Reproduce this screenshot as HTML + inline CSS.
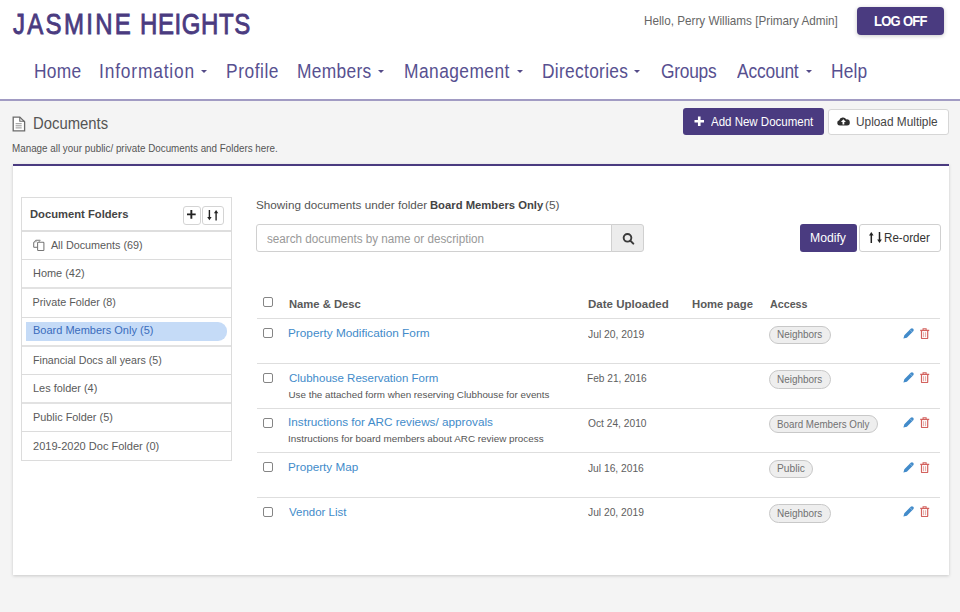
<!DOCTYPE html>
<html><head><meta charset="utf-8"><style>
*{margin:0;padding:0;box-sizing:border-box}
html,body{width:960px;height:612px;overflow:hidden;background:#f4f4f4;font-family:"Liberation Sans",sans-serif}
.a{position:absolute;white-space:nowrap;line-height:1;transform-origin:0 0}
.r{position:absolute}
.cb{position:absolute;width:10px;height:10px;border:1px solid #858585;border-radius:2px;background:#fff}
.caret{position:absolute;width:0;height:0;border-left:3.6px solid transparent;border-right:3.6px solid transparent;border-top:3.2px solid #544b88}
.hl{position:absolute;left:257px;width:683px;height:1px;background:#dedede}
.fb{position:absolute;left:22px;width:209px;height:1px;background:#dcdcdc}
.badge{position:absolute;height:18.5px;border:1px solid #c8c8c8;background:#eeeeee;border-radius:10px}
svg{position:absolute;overflow:visible}
</style></head><body>
<div class="r" style="left:0;top:0;width:960px;height:99px;background:#fff"></div>
<div class="r" style="left:0;top:99px;width:960px;height:2px;background:#a19bc3"></div>
<div class="a" style="left:13.04px;top:9.00px;font-size:30.00px;font-weight:normal;color:#4a3b80;transform:scaleX(0.8000);letter-spacing:2.875px;-webkit-text-stroke:0.9px #4a3b80;">JASMINE</div>
<div class="a" style="left:140.18px;top:9.00px;font-size:30.00px;font-weight:normal;color:#4a3b80;transform:scaleX(0.8000);letter-spacing:0.733px;-webkit-text-stroke:0.9px #4a3b80;">HEIGHTS</div>
<div class="a" style="left:644.06px;top:15.00px;font-size:12.35px;font-weight:normal;color:#666;transform:scaleX(0.9483);">Hello, Perry Williams [Primary Admin]</div>
<div class="r" style="left:857px;top:7px;width:87px;height:28.4px;background:#4a3b80;border-radius:4px;box-shadow:0 1px 4px rgba(0,0,0,.22)"></div>
<div class="a" style="left:873.76px;top:13.00px;font-size:15.10px;font-weight:bold;color:#fff;transform:scaleX(0.8600);letter-spacing:-0.819px;">LOG OFF</div>
<div class="a" style="left:33.81px;top:62.00px;font-size:19.30px;font-weight:normal;color:#575090;transform:scaleX(0.9000);letter-spacing:0.363px;">Home</div>
<div class="a" style="left:99.44px;top:62.00px;font-size:19.30px;font-weight:normal;color:#575090;transform:scaleX(0.9000);letter-spacing:0.927px;">Information</div>
<div class="a" style="left:226.21px;top:62.00px;font-size:19.30px;font-weight:normal;color:#575090;transform:scaleX(0.9000);letter-spacing:0.616px;">Profile</div>
<div class="a" style="left:297.31px;top:62.00px;font-size:19.30px;font-weight:normal;color:#575090;transform:scaleX(0.9000);letter-spacing:0.345px;">Members</div>
<div class="a" style="left:403.81px;top:62.00px;font-size:19.30px;font-weight:normal;color:#575090;transform:scaleX(0.9000);letter-spacing:0.509px;">Management</div>
<div class="a" style="left:542.21px;top:62.00px;font-size:19.30px;font-weight:normal;color:#575090;transform:scaleX(0.9000);letter-spacing:0.341px;">Directories</div>
<div class="a" style="left:660.83px;top:62.00px;font-size:19.30px;font-weight:normal;color:#575090;transform:scaleX(0.9000);letter-spacing:-0.266px;">Groups</div>
<div class="a" style="left:736.70px;top:62.00px;font-size:19.30px;font-weight:normal;color:#575090;transform:scaleX(0.9000);letter-spacing:-0.189px;">Account</div>
<div class="a" style="left:831.31px;top:62.00px;font-size:19.30px;font-weight:normal;color:#575090;transform:scaleX(0.9000);letter-spacing:0.144px;">Help</div>
<div class="caret" style="left:201.3px;top:70px"></div>
<div class="caret" style="left:378.0px;top:70px"></div>
<div class="caret" style="left:516.5px;top:70px"></div>
<div class="caret" style="left:634.0px;top:70px"></div>
<div class="caret" style="left:805.7px;top:70px"></div>
<svg style="left:12px;top:116px" width="14" height="16" viewBox="0 0 14 16"><path d="M1.2 1.1H7.8L12.6 5.8V14.9H1.2Z" fill="#fff" stroke="#6a6a6a" stroke-width="1.3"/><path d="M7.8 1.1V5.3H12.6" fill="none" stroke="#6a6a6a" stroke-width="1.1"/><path d="M3.6 7.7h6.1M3.6 9.8h6.1M3.6 11.9h6.1" stroke="#888" stroke-width="0.9"/></svg>
<div class="a" style="left:32.81px;top:115.00px;font-size:16.13px;font-weight:normal;color:#555;transform:scaleX(0.9213);">Documents</div>
<div class="a" style="left:11.71px;top:143.00px;font-size:10.50px;font-weight:normal;color:#555;transform:scaleX(0.9368);">Manage all your public/ private Documents and Folders here.</div>
<div class="r" style="left:683.3px;top:108.3px;width:140.5px;height:26.7px;background:#4a3b80;border-radius:3px"></div>
<svg style="left:693.7px;top:115.8px" width="10.5" height="10.5" viewBox="0 0 10.5 10.5"><path d="M5.25 0.5v9.5M0.5 5.25h9.5" stroke="#fff" stroke-width="2.6"/></svg>
<div class="a" style="left:710.80px;top:116.00px;font-size:12.30px;font-weight:normal;color:#fff;transform:scaleX(0.9352);">Add New Document</div>
<div class="r" style="left:827.6px;top:108.7px;width:121px;height:26px;background:#fff;border:1px solid #d6d6d6;border-radius:3px"></div>
<svg style="left:837px;top:116.3px" width="13" height="11" viewBox="0 0 13 11"><path d="M2.8 9.6A2.7 2.7 0 0 1 2.2 4.3A4 4 0 0 1 9.4 3.4A3 3 0 0 1 10 9.6Z" fill="#2e2e2e"/><path d="M3.9 6.1L6.4 3.3L8.9 6.1H7.3V8.4H5.5V6.1Z" fill="#fff"/></svg>
<div class="a" style="left:856.31px;top:116.00px;font-size:12.30px;font-weight:normal;color:#444;transform:scaleX(0.9631);">Upload Multiple</div>
<div class="r" style="left:13px;top:164px;width:936px;height:411px;background:#fff;border-top:2px solid #4a3b80;box-shadow:0 1px 3px rgba(0,0,0,.18)"></div>
<div class="r" style="left:21px;top:197px;width:211px;height:264px;border:1px solid #dcdcdc;background:#fff"></div>
<div class="a" style="left:30.27px;top:209.00px;font-size:11.80px;font-weight:bold;color:#444;transform:scaleX(0.9505);">Document Folders</div>
<div class="r" style="left:183px;top:206px;width:17.5px;height:19px;border:1px solid #d4d4d4;border-radius:3px;background:#fff"></div>
<div class="r" style="left:202px;top:206px;width:21.5px;height:19px;border:1px solid #d4d4d4;border-radius:3px;background:#fff"></div>
<svg style="left:187.4px;top:210.2px" width="8.7" height="8.7" viewBox="0 0 8.7 8.7"><path d="M4.35 0v8.7M0 4.35h8.7" stroke="#222" stroke-width="1.9"/></svg>
<svg style="left:206px;top:210px" width="13" height="11" viewBox="0 0 13 11"><path d="M3.4 0v8" stroke="#222" stroke-width="1.4"/><path d="M1.2 7l2.2 3.3l2.2-3.3z" fill="#222"/><path d="M10.1 10.5v-8" stroke="#222" stroke-width="1.4"/><path d="M7.9 3.3l2.2-3.3l2.2 3.3z" fill="#222"/></svg>
<div class="fb" style="top:230px;height:2px;background:#dedede"></div>
<div class="fb" style="top:259px;height:1px;background:#dcdcdc"></div>
<div class="fb" style="top:287px;height:2px;background:#e2e2e2"></div>
<div class="fb" style="top:317px;height:1px;background:#dcdcdc"></div>
<div class="fb" style="top:345px;height:2px;background:#e2e2e2"></div>
<div class="fb" style="top:374px;height:1px;background:#dcdcdc"></div>
<div class="fb" style="top:402px;height:2px;background:#e2e2e2"></div>
<div class="fb" style="top:431px;height:1px;background:#dcdcdc"></div>
<div class="r" style="left:25.5px;top:322px;width:201.5px;height:18.6px;background:#c5dbf7;border-radius:0 9px 9px 0"></div>
<svg style="left:32.5px;top:239px" width="12" height="12" viewBox="0 0 12 12"><path d="M0.7 8.3V3.6L3.1 1.2H7.3" fill="none" stroke="#777" stroke-width="1.05"/><path d="M3.4 1.5L2.9 3.5M7.3 1.2L4.9 4.6" fill="none" stroke="#999" stroke-width="0.8"/><path d="M0.7 8.3H4.6" stroke="#777" stroke-width="1.05"/><rect x="4.6" y="3.3" width="6.3" height="8.1" rx="0.7" fill="#fff" stroke="#777" stroke-width="1.05"/></svg>
<div class="a" style="left:50.90px;top:240.00px;font-size:10.80px;font-weight:normal;color:#5a5a5a;">All Documents (69)</div>
<div class="a" style="left:33.02px;top:268.00px;font-size:10.80px;font-weight:normal;color:#5a5a5a;transform:scaleX(1.0129);">Home (42)</div>
<div class="a" style="left:32.54px;top:297.00px;font-size:10.80px;font-weight:normal;color:#5a5a5a;">Private Folder (8)</div>
<div class="a" style="left:32.52px;top:325.00px;font-size:10.80px;font-weight:normal;color:#3a6cbc;transform:scaleX(1.0189);">Board Members Only (5)</div>
<div class="a" style="left:32.55px;top:355.00px;font-size:10.80px;font-weight:normal;color:#5a5a5a;transform:scaleX(0.9893);">Financial Docs all years (5)</div>
<div class="a" style="left:32.53px;top:383.00px;font-size:10.80px;font-weight:normal;color:#5a5a5a;transform:scaleX(1.0113);">Les folder (4)</div>
<div class="a" style="left:32.53px;top:412.00px;font-size:10.80px;font-weight:normal;color:#5a5a5a;transform:scaleX(1.0076);">Public Folder (5)</div>
<div class="a" style="left:32.85px;top:441.00px;font-size:10.80px;font-weight:normal;color:#5a5a5a;transform:scaleX(1.0215);">2019-2020 Doc Folder (0)</div>
<div class="a" style="left:256.07px;top:199.00px;font-size:11.60px;font-weight:normal;color:#555;transform:scaleX(1.0101);">Showing documents under folder</div>
<div class="a" style="left:429.57px;top:199.00px;font-size:11.60px;font-weight:bold;color:#444;transform:scaleX(0.9704);">Board Members Only</div>
<div class="a" style="left:545.49px;top:199.00px;font-size:11.60px;font-weight:normal;color:#555;transform:scaleX(1.0266);">(5)</div>
<div class="r" style="left:256px;top:224.4px;width:356.3px;height:28px;border:1px solid #d0d0d0;border-radius:3px 0 0 3px;background:#fff"></div>
<div class="a" style="left:266.95px;top:233.00px;font-size:12.50px;font-weight:normal;color:#999;transform:scaleX(0.9351);">search documents by name or description</div>
<div class="r" style="left:611.3px;top:224.4px;width:32.4px;height:28px;border:1px solid #d0d0d0;border-radius:0 3px 3px 0;background:#ececec"></div>
<svg style="left:622px;top:232px" width="12" height="12" viewBox="0 0 12 12"><circle cx="5.5" cy="5.8" r="3.85" fill="none" stroke="#3a3a3a" stroke-width="1.9"/><path d="M8.3 8.6L11.3 11.6" stroke="#3a3a3a" stroke-width="2" stroke-linecap="round"/></svg>
<div class="r" style="left:800.3px;top:224.2px;width:56.7px;height:27.5px;background:#4a3b80;border-radius:3px"></div>
<div class="a" style="left:809.82px;top:232.00px;font-size:12.50px;font-weight:normal;color:#fff;transform:scaleX(0.9773);">Modify</div>
<div class="r" style="left:859.2px;top:224.2px;width:81.6px;height:27.5px;background:#fff;border:1px solid #d0d0d0;border-radius:3px"></div>
<svg style="left:867.6px;top:232.3px" width="15" height="11" viewBox="0 0 15 11"><path d="M3.3 11v-8" stroke="#222" stroke-width="1.5"/><path d="M1 3.4l2.3-3.4l2.3 3.4z" fill="#222"/><path d="M11.5 0v8" stroke="#222" stroke-width="1.5"/><path d="M9.2 7.6l2.3 3.4l2.3-3.4z" fill="#222"/></svg>
<div class="a" style="left:884.37px;top:232.00px;font-size:12.50px;font-weight:normal;color:#333;transform:scaleX(0.9288);">Re-order</div>
<div class="cb" style="left:263px;top:297px"></div>
<div class="a" style="left:289.07px;top:299.00px;font-size:11.80px;font-weight:bold;color:#5a5a5a;transform:scaleX(0.9531);">Name &amp; Desc</div>
<div class="a" style="left:588.00px;top:299.00px;font-size:11.80px;font-weight:bold;color:#5a5a5a;transform:scaleX(0.9776);">Date Uploaded</div>
<div class="a" style="left:692.37px;top:299.00px;font-size:11.80px;font-weight:bold;color:#5a5a5a;transform:scaleX(0.9580);">Home page</div>
<div class="a" style="left:769.83px;top:299.00px;font-size:11.80px;font-weight:bold;color:#5a5a5a;transform:scaleX(0.9079);">Access</div>
<div class="hl" style="top:318px;height:1.3px"></div>
<div class="cb" style="left:263px;top:328.10px"></div>
<div class="a" style="left:288.36px;top:328.00px;font-size:11.30px;font-weight:normal;color:#428bca;transform:scaleX(1.0446);">Property Modification Form</div>
<div class="a" style="left:587.84px;top:329.00px;font-size:10.60px;font-weight:normal;color:#5e5e5e;transform:scaleX(0.9758);">Jul 20, 2019</div>
<div class="badge" style="left:769.2px;top:325.50px;width:62.2px"></div>
<div class="a" style="left:777.30px;top:330.00px;font-size:10.40px;font-weight:normal;color:#717171;transform:scaleX(0.9561);">Neighbors</div>
<svg style="left:902.5px;top:327.50px" width="11" height="11" viewBox="0 0 11 11"><path d="M0.4 10.6L1.33 7.13L7.73 0.73A1.8 1.8 0 0 1 10.27 3.27L3.87 9.67z" fill="#428bca"/><path d="M6.9 1.6L9.4 4.1" stroke="#cfe0f2" stroke-width="0.5"/></svg>
<svg style="left:919.6px;top:327.60px" width="10" height="11" viewBox="0 0 10 11"><path d="M0.2 2.4h9" stroke="#d3625e" stroke-width="1.3"/><path d="M3.1 2.2v-1.4h3v1.4" fill="none" stroke="#d3625e" stroke-width="1.1"/><path d="M1.5 3v6.9q0 0.6 0.6 0.6h5q0.6 0 0.6-0.6v-6.9" fill="none" stroke="#d3625e" stroke-width="1.2"/><path d="M3.6 4.2v5M5.6 4.2v5" stroke="#e0a09d" stroke-width="0.9"/></svg>
<div class="hl" style="top:363.00px"></div>
<div class="cb" style="left:263px;top:372.80px"></div>
<div class="a" style="left:288.73px;top:373.00px;font-size:11.30px;font-weight:normal;color:#428bca;transform:scaleX(1.0164);">Clubhouse Reservation Form</div>
<div class="a" style="left:288.56px;top:390.00px;font-size:9.80px;font-weight:normal;color:#555;">Use the attached form when reserving Clubhouse for events</div>
<div class="a" style="left:587.19px;top:373.00px;font-size:10.60px;font-weight:normal;color:#5e5e5e;transform:scaleX(0.9556);">Feb 21, 2016</div>
<div class="badge" style="left:769.2px;top:370.20px;width:62.2px"></div>
<div class="a" style="left:777.30px;top:375.00px;font-size:10.40px;font-weight:normal;color:#717171;transform:scaleX(0.9561);">Neighbors</div>
<svg style="left:902.5px;top:372.20px" width="11" height="11" viewBox="0 0 11 11"><path d="M0.4 10.6L1.33 7.13L7.73 0.73A1.8 1.8 0 0 1 10.27 3.27L3.87 9.67z" fill="#428bca"/><path d="M6.9 1.6L9.4 4.1" stroke="#cfe0f2" stroke-width="0.5"/></svg>
<svg style="left:919.6px;top:372.30px" width="10" height="11" viewBox="0 0 10 11"><path d="M0.2 2.4h9" stroke="#d3625e" stroke-width="1.3"/><path d="M3.1 2.2v-1.4h3v1.4" fill="none" stroke="#d3625e" stroke-width="1.1"/><path d="M1.5 3v6.9q0 0.6 0.6 0.6h5q0.6 0 0.6-0.6v-6.9" fill="none" stroke="#d3625e" stroke-width="1.2"/><path d="M3.6 4.2v5M5.6 4.2v5" stroke="#e0a09d" stroke-width="0.9"/></svg>
<div class="hl" style="top:407.70px"></div>
<div class="cb" style="left:263px;top:417.50px"></div>
<div class="a" style="left:288.24px;top:417.00px;font-size:11.30px;font-weight:normal;color:#428bca;transform:scaleX(1.0395);">Instructions for ARC reviews/ approvals</div>
<div class="a" style="left:288.41px;top:434.00px;font-size:9.80px;font-weight:normal;color:#555;transform:scaleX(1.0075);">Instructions for board members about ARC review process</div>
<div class="a" style="left:587.54px;top:418.00px;font-size:10.60px;font-weight:normal;color:#5e5e5e;transform:scaleX(0.9643);">Oct 24, 2010</div>
<div class="badge" style="left:769.2px;top:414.90px;width:108.5px"></div>
<div class="a" style="left:777.32px;top:420.00px;font-size:10.40px;font-weight:normal;color:#717171;transform:scaleX(0.9410);">Board Members Only</div>
<svg style="left:902.5px;top:416.90px" width="11" height="11" viewBox="0 0 11 11"><path d="M0.4 10.6L1.33 7.13L7.73 0.73A1.8 1.8 0 0 1 10.27 3.27L3.87 9.67z" fill="#428bca"/><path d="M6.9 1.6L9.4 4.1" stroke="#cfe0f2" stroke-width="0.5"/></svg>
<svg style="left:919.6px;top:417.00px" width="10" height="11" viewBox="0 0 10 11"><path d="M0.2 2.4h9" stroke="#d3625e" stroke-width="1.3"/><path d="M3.1 2.2v-1.4h3v1.4" fill="none" stroke="#d3625e" stroke-width="1.1"/><path d="M1.5 3v6.9q0 0.6 0.6 0.6h5q0.6 0 0.6-0.6v-6.9" fill="none" stroke="#d3625e" stroke-width="1.2"/><path d="M3.6 4.2v5M5.6 4.2v5" stroke="#e0a09d" stroke-width="0.9"/></svg>
<div class="hl" style="top:452.40px"></div>
<div class="cb" style="left:263px;top:462.20px"></div>
<div class="a" style="left:288.36px;top:462.00px;font-size:11.30px;font-weight:normal;color:#428bca;transform:scaleX(1.0355);">Property Map</div>
<div class="a" style="left:587.85px;top:463.00px;font-size:10.60px;font-weight:normal;color:#5e5e5e;transform:scaleX(0.9670);">Jul 16, 2016</div>
<div class="badge" style="left:769.2px;top:459.60px;width:43.6px"></div>
<div class="a" style="left:777.28px;top:464.00px;font-size:10.40px;font-weight:normal;color:#717171;transform:scaleX(0.9836);">Public</div>
<svg style="left:902.5px;top:461.60px" width="11" height="11" viewBox="0 0 11 11"><path d="M0.4 10.6L1.33 7.13L7.73 0.73A1.8 1.8 0 0 1 10.27 3.27L3.87 9.67z" fill="#428bca"/><path d="M6.9 1.6L9.4 4.1" stroke="#cfe0f2" stroke-width="0.5"/></svg>
<svg style="left:919.6px;top:461.70px" width="10" height="11" viewBox="0 0 10 11"><path d="M0.2 2.4h9" stroke="#d3625e" stroke-width="1.3"/><path d="M3.1 2.2v-1.4h3v1.4" fill="none" stroke="#d3625e" stroke-width="1.1"/><path d="M1.5 3v6.9q0 0.6 0.6 0.6h5q0.6 0 0.6-0.6v-6.9" fill="none" stroke="#d3625e" stroke-width="1.2"/><path d="M3.6 4.2v5M5.6 4.2v5" stroke="#e0a09d" stroke-width="0.9"/></svg>
<div class="hl" style="top:497.10px"></div>
<div class="cb" style="left:263px;top:506.90px"></div>
<div class="a" style="left:289.24px;top:507.00px;font-size:11.30px;font-weight:normal;color:#428bca;transform:scaleX(1.0144);">Vendor List</div>
<div class="a" style="left:587.85px;top:507.00px;font-size:10.60px;font-weight:normal;color:#5e5e5e;transform:scaleX(0.9679);">Jul 20, 2019</div>
<div class="badge" style="left:769.2px;top:504.30px;width:62.2px"></div>
<div class="a" style="left:777.30px;top:509.00px;font-size:10.40px;font-weight:normal;color:#717171;transform:scaleX(0.9561);">Neighbors</div>
<svg style="left:902.5px;top:506.30px" width="11" height="11" viewBox="0 0 11 11"><path d="M0.4 10.6L1.33 7.13L7.73 0.73A1.8 1.8 0 0 1 10.27 3.27L3.87 9.67z" fill="#428bca"/><path d="M6.9 1.6L9.4 4.1" stroke="#cfe0f2" stroke-width="0.5"/></svg>
<svg style="left:919.6px;top:506.40px" width="10" height="11" viewBox="0 0 10 11"><path d="M0.2 2.4h9" stroke="#d3625e" stroke-width="1.3"/><path d="M3.1 2.2v-1.4h3v1.4" fill="none" stroke="#d3625e" stroke-width="1.1"/><path d="M1.5 3v6.9q0 0.6 0.6 0.6h5q0.6 0 0.6-0.6v-6.9" fill="none" stroke="#d3625e" stroke-width="1.2"/><path d="M3.6 4.2v5M5.6 4.2v5" stroke="#e0a09d" stroke-width="0.9"/></svg>
</body></html>
